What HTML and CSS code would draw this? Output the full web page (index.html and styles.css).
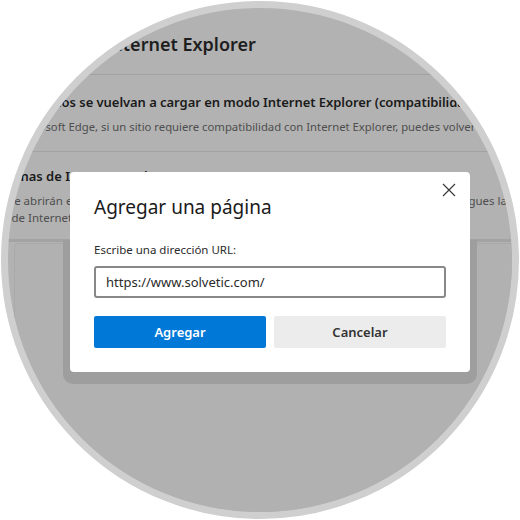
FILE: index.html
```html
<!DOCTYPE html>
<html lang="es">
<head>
<meta charset="utf-8">
<title>Agregar una página</title>
<link rel="stylesheet" href="styles.css">
</head>
<body>
<div class="lens">
  <div class="page">
    <header class="sec-head"><h1 class="sec-title">Compatibilidad con Internet Explorer</h1></header>
    <section class="row row1">
      <div class="row-title">Permite que los sitios se vuelvan a cargar en modo Internet Explorer (compatibilidad con IE)</div>
      <div class="row-desc">Al explorar en Microsoft Edge, si un sitio requiere compatibilidad con Internet Explorer, puedes volver a cargarlo en modo Internet Explorer</div>
    </section>
    <section class="row row2">
      <div class="row-title">Páginas de Internet Explorer</div>
      <div class="row-desc desc-a">Estas páginas se abrirán en modo Internet Explorer durante 30 días a partir de la fecha en que agregues la página.</div>
      <div class="row-desc desc-b">la lista de Internet Explorer.</div>
    </section>
    <div class="card"></div>
  </div>
  <div class="dlg-shade"></div>
  <div class="dialog" role="dialog" aria-label="Agregar una página">
    <button class="close" aria-label="Cerrar">
      <svg width="14" height="14" viewBox="0 0 14 14"><path d="M1 1L13 13M13 1L1 13" stroke="#3a3a3a" stroke-width="1.2" fill="none"/></svg>
    </button>
    <h2 class="dlg-title">Agregar una página</h2>
    <label class="dlg-label" for="url">Escribe una dirección URL:</label>
    <div class="url-input" id="url">https://www.solvetic.com/</div>
    <div class="actions">
      <button class="btn btn-primary">Agregar</button>
      <button class="btn btn-secondary">Cancelar</button>
    </div>
  </div>
</div>
</body>
</html>
```
FILE: styles.css
```css
html, body {
  margin: 0;
  padding: 0;
  background: #ffffff;
}
body {
  font-family: "Noto Sans", "Open Sans", sans-serif;
}
.lens {
  position: relative;
  box-sizing: border-box;
  width: 518px;
  height: 518px;
  margin: 1px;
  border: 7px solid #cfcfcf;
  border-radius: 50%;
  overflow: hidden;
  background: #b2b2b2;
}
.page {
  margin-left: -78px;
  width: 900px;
  white-space: nowrap;
}
.sec-head {
  padding: 22px 0 16px 0;
  border-bottom: 1px solid #a2a2a2;
  margin-left: 78px;
}
.sec-title {
  margin: 0 0 0 -78px;
  font-size: 18px;
  line-height: 28px;
  font-weight: 600;
  color: #1e1e1e;
}
.row {
  border-bottom: 1px solid #a2a2a2;
  margin-left: 78px;
}
.row1 {
  padding: 17px 0 15px 0;
}
.row1 .row-title {
  margin-left: -67px;
  letter-spacing: -0.05px;
}
.row1 .row-desc {
  margin-left: -69px;
  margin-top: 6px;
  font-size: 11.3px;
  line-height: 18px;
  color: #4e4e4e;
}
.row2 {
  padding: 14px 0 13px 0;
  border-bottom: 3px solid #a3a3a3;
}
.row-title {
  font-size: 13px;
  line-height: 20px;
  font-weight: 600;
  color: #1b1b1b;
}
.row2 .row-title {
  margin-left: -15px;
  margin-bottom: 6px;
}
.row2 .row-desc {
  font-size: 11.5px;
  line-height: 17px;
  color: #4e4e4e;
}
.row2 .desc-a {
  margin-left: -76px;
}
.row2 .desc-b {
  margin-left: -34px;
}
.card {
  margin: 1px 0 0 84px;
  width: 540px;
  height: 300px;
  border: 1px solid #a9a9a9;
  border-radius: 4px;
  background: #b1b1b1;
}
.dlg-shade {
  position: absolute;
  left: 55px;
  top: 232px;
  width: 414px;
  height: 144px;
  background: #9e9e9e;
  border-radius: 0 0 10px 10px;
}
.dialog {
  position: absolute;
  left: 62px;
  top: 164px;
  width: 400px;
  height: 200px;
  box-sizing: border-box;
  padding: 21px 24px 24px 24px;
  background: #ffffff;
  border-radius: 4px;
  display: flex;
  flex-direction: column;
}
.close {
  position: absolute;
  left: 372px;
  top: 11px;
  width: 14px;
  height: 14px;
  padding: 0;
  border: 0;
  background: transparent;
  display: block;
}
.close svg {
  display: block;
}
.dlg-title {
  margin: 0;
  font-size: 19px;
  line-height: 28px;
  font-weight: 400;
  color: #1a1a1a;
}
.dlg-label {
  margin-top: 20px;
  font-size: 11.5px;
  line-height: 18px;
  color: #2b2b2b;
}
.url-input {
  margin-top: 7px;
  box-sizing: border-box;
  height: 32px;
  border: 2px solid #888888;
  border-radius: 3px;
  padding: 0 10px;
  font-size: 13px;
  line-height: 28px;
  color: #2b2b2b;
}
.actions {
  margin-top: 18px;
  display: flex;
  gap: 8px;
}
.btn {
  flex: 1;
  height: 32px;
  border: 0;
  border-radius: 2px;
  font-family: "Noto Sans", "Open Sans", sans-serif;
  font-size: 13px;
  font-weight: 600;
  padding: 0;
}
.btn-primary {
  background: #0078d7;
  color: #ffffff;
}
.btn-secondary {
  background: #ececec;
  color: #333333;
}
```
